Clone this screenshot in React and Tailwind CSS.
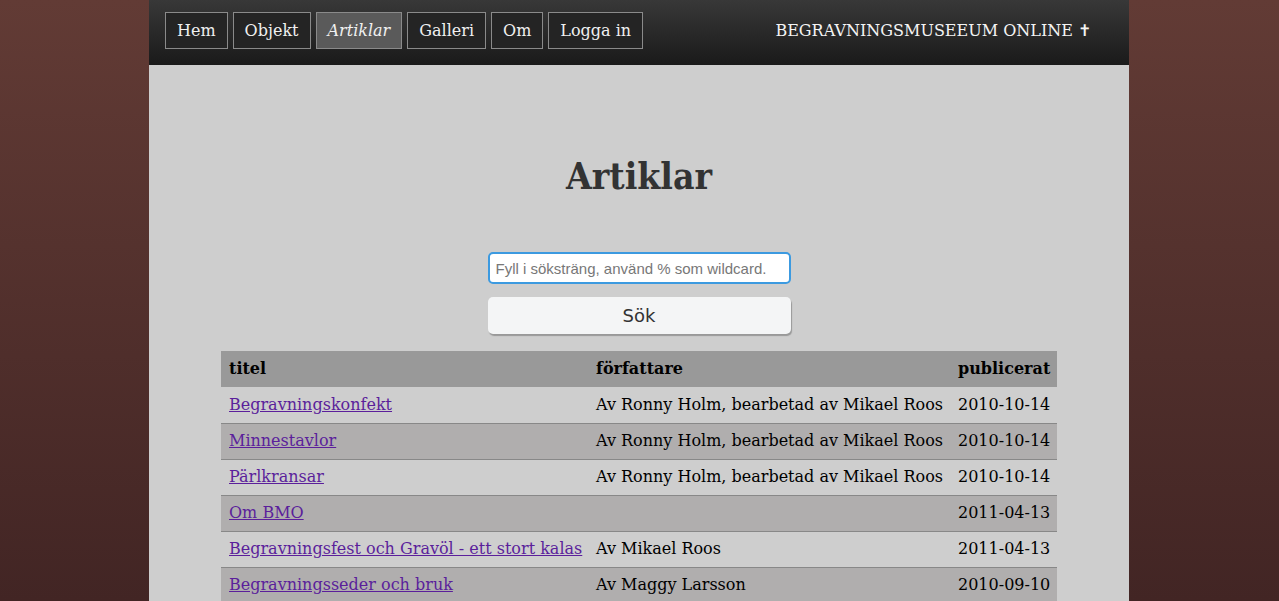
import React from 'react'

const navItems = ['Hem', 'Objekt', 'Artiklar', 'Galleri', 'Om', 'Logga in']

const articles = [
  { title: 'Begravningskonfekt', author: 'Av Ronny Holm, bearbetad av Mikael Roos', date: '2010-10-14' },
  { title: 'Minnestavlor', author: 'Av Ronny Holm, bearbetad av Mikael Roos', date: '2010-10-14' },
  { title: 'Pärlkransar', author: 'Av Ronny Holm, bearbetad av Mikael Roos', date: '2010-10-14' },
  { title: 'Om BMO', author: '', date: '2011-04-13' },
  { title: 'Begravningsfest och Gravöl - ett stort kalas', author: 'Av Mikael Roos', date: '2011-04-13' },
  { title: 'Begravningsseder och bruk', author: 'Av Maggy Larsson', date: '2010-09-10' },
]

export default function App() {
  return (
    <div className="min-h-screen bg-[linear-gradient(to_bottom,#623b35,#422524)] font-['DejaVu_Serif',serif]">
      <div className="ml-[149px] w-[980px] bg-[#cecece] h-[601px] overflow-hidden">
        {/* Header */}
        <header className="h-[65px] bg-[linear-gradient(to_bottom,#383838,#1a1a1a)] flex items-start justify-between pl-4 pr-[38px] pt-3">
          <nav className="flex gap-[5px]">
            {navItems.map((item) => {
              const active = item === 'Artiklar'
              return (
                <a
                  key={item}
                  href="#"
                  className={`h-[37px] px-[11px] flex items-center border border-[#8a8a8a] text-[16px] text-[#f0f0f0] ${
                    active ? 'bg-[#5a5a5a] italic' : 'bg-[#242424]'
                  }`}
                >
                  {item}
                </a>
              )
            })}
          </nav>
          <div className="h-[37px] flex items-center text-[16px] text-[#f4f4f4]">
            BEGRAVNINGSMUSEEUM ONLINE ✝
          </div>
        </header>

        {/* Content */}
        <main className="flex flex-col items-center">
          <h1 className="mt-[93px] text-[37px] font-bold text-[#333] leading-none font-['DejaVu_Serif_Condensed','DejaVu_Serif',serif]">
            Artiklar
          </h1>

          <form className="mt-[57px] flex flex-col gap-[13px] w-[303px]">
            <input
              type="text"
              placeholder="Fyll i söksträng, använd % som wildcard."
              className="h-[32px] rounded-[5px] border-2 border-[#3c9ae0] bg-white px-[6px] text-[15px] text-[#333] placeholder:text-[#777] font-['Liberation_Sans',sans-serif] outline-none"
            />
            <button
              type="button"
              className="h-[37px] rounded-[5px] bg-[#f4f5f6] shadow-[1px_2px_1px_#999] text-[18px] text-[#333] font-['DejaVu_Sans',sans-serif]"
            >
              Sök
            </button>
          </form>

          <table className="mt-[17px] w-[836px] table-fixed text-[16px] text-black border-collapse">
            <colgroup>
              <col className="w-[367px]" />
              <col className="w-[362px]" />
              <col className="w-[107px]" />
            </colgroup>
            <thead>
              <tr className="bg-[#999] h-[36px] text-left">
                <th className="px-2 font-bold">titel</th>
                <th className="px-2 font-bold">författare</th>
                <th className="px-2 font-bold">publicerat</th>
              </tr>
            </thead>
            <tbody>
              {articles.map((a, i) => (
                <tr
                  key={a.title}
                  className={`h-[36px] border-b border-[#888] ${i % 2 === 0 ? 'bg-[#cecece]' : 'bg-[#b0aeae]'}`}
                >
                  <td className="px-2 whitespace-nowrap">
                    <a href="#" className="text-[#5b1f9b] underline">
                      {a.title}
                    </a>
                  </td>
                  <td className="px-2 whitespace-nowrap">{a.author}</td>
                  <td className="px-2 whitespace-nowrap">{a.date}</td>
                </tr>
              ))}
            </tbody>
          </table>
        </main>
      </div>
    </div>
  )
}
